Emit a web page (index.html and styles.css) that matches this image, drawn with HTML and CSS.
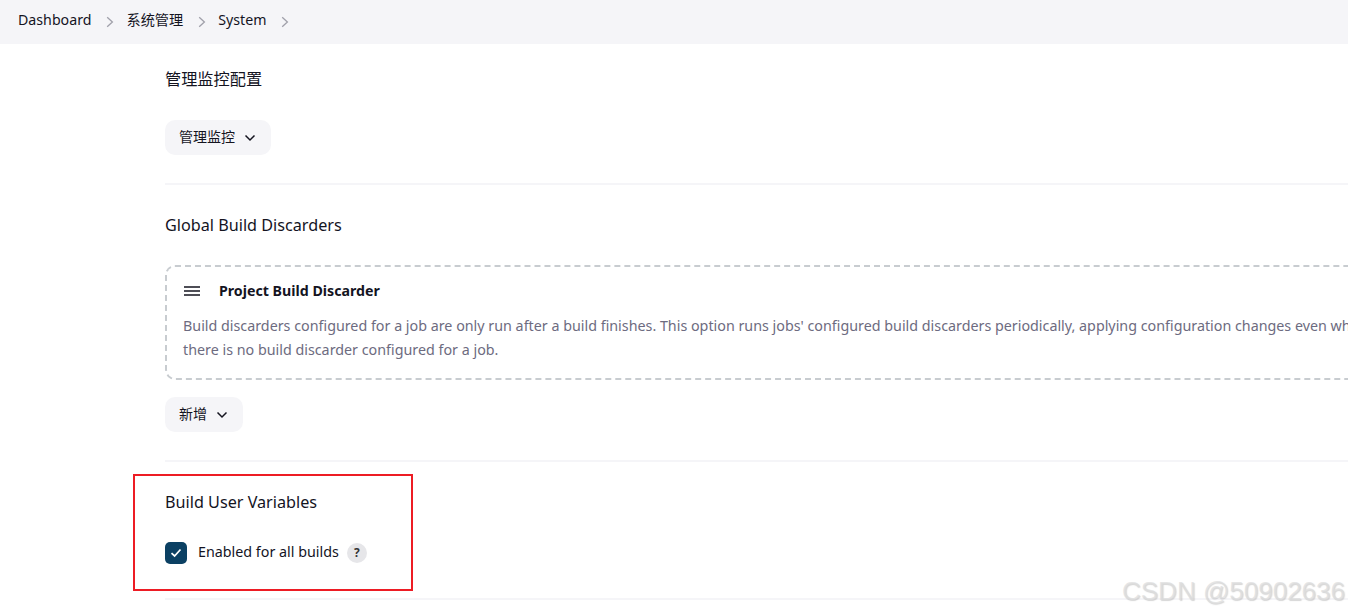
FILE: index.html
```html
<!DOCTYPE html>
<html lang="zh">
<head>
<meta charset="utf-8">
<title>System</title>
<link rel="stylesheet" href="styles.css">
</head>
<body>
<nav class="crumbs">
  <span class="crumb">Dashboard</span>
  <svg class="sep" viewBox="0 0 8 12"><path d="M1.2 1.2 6.4 6l-5.2 4.8"/></svg>
  <span class="crumb">系统管理</span>
  <svg class="sep" viewBox="0 0 8 12"><path d="M1.2 1.2 6.4 6l-5.2 4.8"/></svg>
  <span class="crumb">System</span>
  <svg class="sep" viewBox="0 0 8 12"><path d="M1.2 1.2 6.4 6l-5.2 4.8"/></svg>
</nav>
<main class="main">
  <section class="section">
    <h2 class="title">管理监控配置</h2>
    <button class="btn"><span class="btn-text">管理监控</span><svg class="chev" viewBox="0 0 12 8"><path d="M1.5 1.5 6 6l4.5-4.5"/></svg></button>
  </section>
  <section class="section">
    <h2 class="title">Global Build Discarders</h2>
    <div class="card">
      <div class="card-head">
        <svg class="handle" viewBox="0 0 16 10"><path d="M0 1h16M0 5h16M0 9h16"/></svg>
        <strong class="card-title">Project Build Discarder</strong>
      </div>
      <p class="desc">Build discarders configured for a job are only run after a build finishes. This option runs jobs' configured build discarders periodically, applying configuration changes even when<br>there is no build discarder configured for a job.</p>
    </div>
    <button class="btn"><span class="btn-text">新增</span><svg class="chev" viewBox="0 0 12 8"><path d="M1.5 1.5 6 6l4.5-4.5"/></svg></button>
  </section>
  <section class="section">
    <h2 class="title">Build User Variables</h2>
    <div class="check-row">
      <span class="box"><svg viewBox="0 0 12 10"><path d="M1.5 5.2 4.6 8l5.9-6.5"/></svg></span>
      <span class="label">Enabled for all builds</span>
      <span class="help">?</span>
    </div>
  </section>
</main>
<div class="redbox"></div>
<div class="mark">CSDN @50902636</div>
</body>
</html>
```
FILE: styles.css
```css
html, body { margin: 0; height: 613px; overflow: hidden; background: #fff; }
body {
  width: 1348px;
  position: relative;
  font-family: "Noto Sans", "Noto Sans CJK SC", sans-serif;
  color: #14141f;
}
.crumbs {
  height: 44px;
  background: #f5f5f8;
  display: flex;
  align-items: center;
  padding-left: 18px;
  font-size: 14.2px;
}
.crumb { line-height: 40px; margin-top: -4px; }
.sep { width: 8px; height: 12px; margin: 0 12px 0 15px; fill: none; stroke: #a0a0aa; stroke-width: 1.3; }
.main { padding-left: 165px; width: 1348px; box-sizing: border-box; overflow: hidden; }
.section { border-bottom: 2px solid #f5f5f8; }
.section:nth-child(1) { height: 139px; }
.section:nth-child(2) { height: 275px; }
.section:nth-child(3) { height: 136px; }
.title {
  margin: 0;
  font-size: 16.2px;
  font-weight: 400;
  line-height: 24px;
  padding-top: 23px;
}
.section:nth-child(n+2) .title { padding-top: 28px; }
.btn {
  display: flex;
  align-items: center;
  height: 35px;
  margin-top: 29px;
  padding: 0 15px 0 14px;
  border: 0;
  border-radius: 10px;
  background: #f5f5f8;
  font: inherit;
  font-size: 14px;
  color: #14141f;
}
.btn-text { line-height: 20px; margin-top: -1px; }
.chev { width: 12px; height: 8px; margin-left: 9px; fill: none; stroke: #14141f; stroke-width: 1.5; }
.card {
  height: 115px;
  box-sizing: border-box;
  margin-top: 28px;
  border: 2px dashed #c8ccd0;
  border-radius: 10px;
  padding: 14px 0 0 16px;
  width: 1300px;
}
.card + .btn { margin-top: 17px; }
.card-head { display: flex; align-items: center; height: 20px; }
.handle { width: 16px; height: 10px; margin-left: 1px; fill: none; stroke: #14141f; stroke-width: 1.4; }
.card-title { margin-left: 19px; font-size: 14.2px; font-weight: 700; margin-top: -2px; }
.desc {
  margin: 13px 0 0;
  font-size: 14.3px;
  line-height: 24px;
  color: #6d6b80;
  white-space: nowrap;
}
.check-row { display: flex; align-items: center; margin-top: 28px; height: 22px; }
.box {
  width: 22px;
  height: 22px;
  border-radius: 5px;
  background: #0b4063;
  display: flex;
  align-items: center;
  justify-content: center;
}
.box svg { width: 12px; height: 10px; fill: none; stroke: #fff; stroke-width: 1.7; }
.label { margin-left: 11px; font-size: 14.3px; line-height: 20px; margin-top: -2px; }
.help {
  width: 20px;
  height: 20px;
  margin-left: 8px;
  border-radius: 50%;
  background: #e6e6e9;
  font-size: 12px;
  font-weight: 700;
  line-height: 20px;
  text-align: center;
  color: #333;
}
.redbox {
  position: absolute;
  left: 133px;
  top: 474px;
  width: 276px;
  height: 113px;
  border: 2px solid #ed1c24;
}
.mark {
  position: absolute;
  left: 1122px;
  top: 576px;
  font-family: "Liberation Sans", sans-serif;
  font-size: 26px;
  line-height: 30px;
  color: rgba(222, 222, 222, .75);
  text-shadow: 1px 1px 1px rgba(120, 120, 120, .3);
  white-space: nowrap;
}
```
